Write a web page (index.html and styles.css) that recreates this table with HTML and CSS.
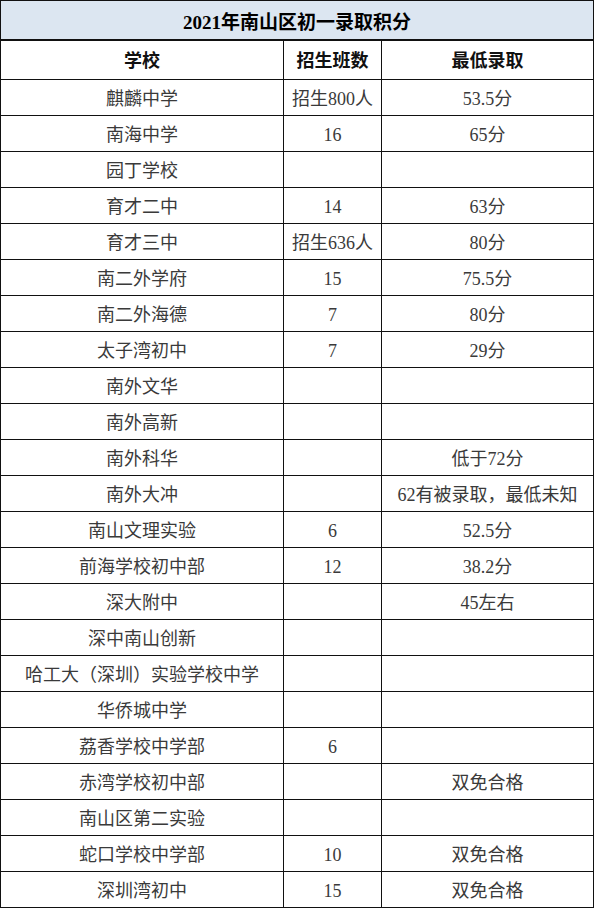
FILE: index.html
```html
<!DOCTYPE html>
<html lang="zh-CN">
<head>
<meta charset="utf-8">
<title>2021年南山区初一录取积分</title>
<link rel="stylesheet" href="styles.css">
</head>
<body>
<div class="sheet">
  <div class="cell title">2021年南山区初一录取积分</div>
  <div class="cell head">学校</div><div class="cell head">招生班数</div><div class="cell head">最低录取</div>
  <div class="cell">麒麟中学</div><div class="cell">招生800人</div><div class="cell">53.5分</div>
  <div class="cell">南海中学</div><div class="cell">16</div><div class="cell">65分</div>
  <div class="cell">园丁学校</div><div class="cell"></div><div class="cell"></div>
  <div class="cell">育才二中</div><div class="cell">14</div><div class="cell">63分</div>
  <div class="cell">育才三中</div><div class="cell">招生636人</div><div class="cell">80分</div>
  <div class="cell">南二外学府</div><div class="cell">15</div><div class="cell">75.5分</div>
  <div class="cell">南二外海德</div><div class="cell">7</div><div class="cell">80分</div>
  <div class="cell">太子湾初中</div><div class="cell">7</div><div class="cell">29分</div>
  <div class="cell">南外文华</div><div class="cell"></div><div class="cell"></div>
  <div class="cell">南外高新</div><div class="cell"></div><div class="cell"></div>
  <div class="cell">南外科华</div><div class="cell"></div><div class="cell">低于72分</div>
  <div class="cell">南外大冲</div><div class="cell"></div><div class="cell">62有被录取，最低未知</div>
  <div class="cell">南山文理实验</div><div class="cell">6</div><div class="cell">52.5分</div>
  <div class="cell">前海学校初中部</div><div class="cell">12</div><div class="cell">38.2分</div>
  <div class="cell">深大附中</div><div class="cell"></div><div class="cell">45左右</div>
  <div class="cell">深中南山创新</div><div class="cell"></div><div class="cell"></div>
  <div class="cell">哈工大（深圳）实验学校中学</div><div class="cell"></div><div class="cell"></div>
  <div class="cell">华侨城中学</div><div class="cell"></div><div class="cell"></div>
  <div class="cell">荔香学校中学部</div><div class="cell">6</div><div class="cell"></div>
  <div class="cell">赤湾学校初中部</div><div class="cell"></div><div class="cell">双免合格</div>
  <div class="cell">南山区第二实验</div><div class="cell"></div><div class="cell"></div>
  <div class="cell">蛇口学校中学部</div><div class="cell">10</div><div class="cell">双免合格</div>
  <div class="cell">深圳湾初中</div><div class="cell">15</div><div class="cell">双免合格</div>
</div>
</body>
</html>
```

FILE: styles.css
```css
html, body {
  margin: 0;
  padding: 0;
  background: #fff;
}

.sheet {
  width: 594px;
  box-sizing: border-box;
  display: grid;
  grid-template-columns: 282px 97px 211px;
  grid-template-rows: 39px 38px repeat(23, 35px);
  gap: 1px;
  padding: 1px;
  background: #111;
  font-family: "Liberation Serif", "Noto Sans CJK SC", serif;
  font-size: 18px;
  color: #3a3a3a;
}

.cell {
  background: #fff;
  display: flex;
  align-items: center;
  justify-content: center;
  white-space: nowrap;
  line-height: 1;
  padding-top: 3px;
}

.title {
  grid-column: 1 / -1;
  margin-bottom: 1px;
  background: #dce6f1;
  font-size: 19px;
  font-weight: bold;
  color: #000;
  padding-top: 4px;
}

.head {
  font-weight: bold;
  color: #111;
  padding-top: 2px;
}
```
